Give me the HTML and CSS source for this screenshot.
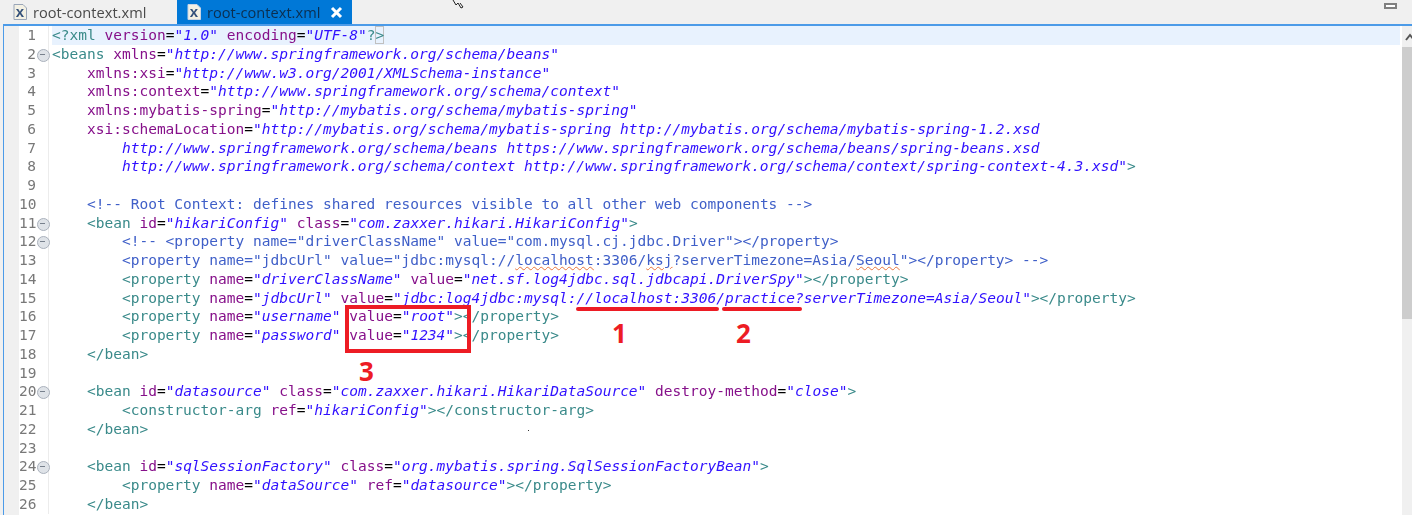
FILE: index.html
```html
<!DOCTYPE html>
<html lang="en">
<head>
<meta charset="utf-8">
<title>root-context.xml</title>
<link rel="stylesheet" href="styles.css">
</head>
<body>
<div class="window">
  <div class="tabs">
    <div class="tab">
      <svg class="file" viewBox="0 0 14 16"><path d="M1 .5h9l3.5 3.5v11.500h-12.500z" fill="#f4f1e4" stroke="#9aa6b8"/><text x="7" y="13" text-anchor="middle" class="filex">x</text></svg>
      <span>root-context.xml</span>
    </div>
    <div class="tab active">
      <svg class="file" viewBox="0 0 14 16"><path d="M1 .5h9l3.500 3.500v11.500h-12.500z" fill="#f4f1e4" stroke="#c8d4e4"/><text x="7" y="13" text-anchor="middle" class="filex">x</text></svg>
      <span>root-context.xml</span>
      <svg class="close" viewBox="0 0 13 13"><path d="M2 2l9 9M11 2l-9 9" stroke="#fff" stroke-width="3"/></svg>
    </div>
    <div class="maximize"></div>
  </div>
  <div class="editor">
    <div class="ruler"></div>
    <div class="lines">
      <div class="row"><span class="num">1</span><span class="fold"></span><code class="code current"><span class="t">&lt;?</span><span class="t">xml</span> <span class="a">version</span>=<span class="s">"1.0"</span> <span class="a">encoding</span>=<span class="s">"UTF-8"</span><span class="t">?</span><span class="t bracket">&gt;</span></code></div>
      <div class="row"><span class="num">2</span><span class="fold on"></span><code class="code"><span class="t">&lt;beans</span> <span class="a">xmlns</span>=<span class="s">"http://www.springframework.org/schema/beans"</span></code></div>
      <div class="row"><span class="num">3</span><span class="fold"></span><code class="code">    <span class="a">xmlns:xsi</span>=<span class="s">"http://www.w3.org/2001/XMLSchema-instance"</span></code></div>
      <div class="row"><span class="num">4</span><span class="fold"></span><code class="code">    <span class="a">xmlns:context</span>=<span class="s">"http://www.springframework.org/schema/context"</span></code></div>
      <div class="row"><span class="num">5</span><span class="fold"></span><code class="code">    <span class="a">xmlns:mybatis-spring</span>=<span class="s">"http://mybatis.org/schema/mybatis-spring"</span></code></div>
      <div class="row"><span class="num">6</span><span class="fold"></span><code class="code">    <span class="a">xsi:schemaLocation</span>=<span class="s">"http://mybatis.org/schema/mybatis-spring http://mybatis.org/schema/mybatis-spring-1.2.xsd</span></code></div>
      <div class="row"><span class="num">7</span><span class="fold"></span><code class="code"><span class="s">        http://www.springframework.org/schema/beans https://www.springframework.org/schema/beans/spring-beans.xsd</span></code></div>
      <div class="row"><span class="num">8</span><span class="fold"></span><code class="code"><span class="s">        http://www.springframework.org/schema/context http://www.springframework.org/schema/context/spring-context-4.3.xsd"</span><span class="t">&gt;</span></code></div>
      <div class="row"><span class="num">9</span><span class="fold"></span><code class="code"></code></div>
      <div class="row"><span class="num">10</span><span class="fold"></span><code class="code">    <span class="c">&lt;!-- Root Context: defines shared resources visible to all other web components --&gt;</span></code></div>
      <div class="row"><span class="num">11</span><span class="fold on"></span><code class="code">    <span class="t">&lt;bean</span> <span class="a">id</span>=<span class="s">"hikariConfig"</span> <span class="a">class</span>=<span class="s">"com.zaxxer.hikari.HikariConfig"</span><span class="t">&gt;</span></code></div>
      <div class="row"><span class="num">12</span><span class="fold on"></span><code class="code">        <span class="c">&lt;!-- &lt;property name="driverClassName" value="com.mysql.cj.jdbc.Driver"&gt;&lt;/property&gt;</span></code></div>
      <div class="row"><span class="num">13</span><span class="fold"></span><code class="code">        <span class="c">&lt;property name="jdbcUrl" value="jdbc:mysql://<span class="spell">localhost</span>:3306/<span class="spell">ksj</span>?serverTimezone=Asia/<span class="spell">Seoul</span>"&gt;&lt;/property&gt; --&gt;</span></code></div>
      <div class="row"><span class="num">14</span><span class="fold"></span><code class="code">        <span class="t">&lt;property</span> <span class="a">name</span>=<span class="s">"driverClassName"</span> <span class="a">value</span>=<span class="s">"net.sf.log4jdbc.sql.jdbcapi.DriverSpy"</span><span class="t">&gt;&lt;/property&gt;</span></code></div>
      <div class="row"><span class="num">15</span><span class="fold"></span><code class="code">        <span class="t">&lt;property</span> <span class="a">name</span>=<span class="s">"jdbcUrl"</span> <span class="a">value</span>=<span class="s">"jdbc:log4jdbc:mysql://localhost:3306/practice?serverTimezone=Asia/Seoul"</span><span class="t">&gt;&lt;/property&gt;</span></code></div>
      <div class="row"><span class="num">16</span><span class="fold"></span><code class="code">        <span class="t">&lt;property</span> <span class="a">name</span>=<span class="s">"username"</span> <span class="a">value</span>=<span class="s">"root"</span><span class="t">&gt;&lt;/property&gt;</span></code></div>
      <div class="row"><span class="num">17</span><span class="fold"></span><code class="code">        <span class="t">&lt;property</span> <span class="a">name</span>=<span class="s">"password"</span> <span class="a">value</span>=<span class="s">"1234"</span><span class="t">&gt;&lt;/property&gt;</span></code></div>
      <div class="row"><span class="num">18</span><span class="fold"></span><code class="code">    <span class="t">&lt;/bean&gt;</span></code></div>
      <div class="row"><span class="num">19</span><span class="fold"></span><code class="code"></code></div>
      <div class="row"><span class="num">20</span><span class="fold on"></span><code class="code">    <span class="t">&lt;bean</span> <span class="a">id</span>=<span class="s">"datasource"</span> <span class="a">class</span>=<span class="s">"com.zaxxer.hikari.HikariDataSource"</span> <span class="a">destroy-method</span>=<span class="s">"close"</span><span class="t">&gt;</span></code></div>
      <div class="row"><span class="num">21</span><span class="fold"></span><code class="code">        <span class="t">&lt;constructor-arg</span> <span class="a">ref</span>=<span class="s">"hikariConfig"</span><span class="t">&gt;&lt;/constructor-arg&gt;</span></code></div>
      <div class="row"><span class="num">22</span><span class="fold"></span><code class="code">    <span class="t">&lt;/bean&gt;</span></code></div>
      <div class="row"><span class="num">23</span><span class="fold"></span><code class="code"></code></div>
      <div class="row"><span class="num">24</span><span class="fold on"></span><code class="code">    <span class="t">&lt;bean</span> <span class="a">id</span>=<span class="s">"sqlSessionFactory"</span> <span class="a">class</span>=<span class="s">"org.mybatis.spring.SqlSessionFactoryBean"</span><span class="t">&gt;</span></code></div>
      <div class="row"><span class="num">25</span><span class="fold"></span><code class="code">        <span class="t">&lt;property</span> <span class="a">name</span>=<span class="s">"dataSource"</span> <span class="a">ref</span>=<span class="s">"datasource"</span><span class="t">&gt;&lt;/property&gt;</span></code></div>
      <div class="row"><span class="num">26</span><span class="fold"></span><code class="code">    <span class="t">&lt;/bean&gt;</span></code></div>
    </div>
    <div class="scrollbar">
      <div class="arrow"><svg viewBox="0 0 10 8"><path d="M1 7l4-5 4 5" fill="none" stroke="#555" stroke-width="2"/></svg></div>
      <div class="thumb"></div>
    </div>
  </div>
  <div class="mark line-one"></div>
  <div class="mark line-two"></div>
  <div class="mark box"></div>
  <div class="mark digit digit-one">1</div>
  <div class="mark digit digit-two">2</div>
  <div class="mark digit digit-three">3</div>
  <svg class="mark pointer" viewBox="0 0 12 10"><path d="M1 0l3 5 2-2 3 5 2-1-3-4" fill="none" stroke="#222"/></svg>
  <div class="mark speck"></div>
</div>
</body>
</html>
```
FILE: styles.css
```css
* { box-sizing: border-box; }
html, body { margin: 0; padding: 0; }
body { background: #f0f0f0; overflow: hidden; }

.window { position: relative; width: 1412px; height: 515px; overflow: hidden; display: flex; flex-direction: column; }

.tabs { height: 24px; display: flex; align-items: stretch; background: #f0f0f0; font-family: "Open Sans", sans-serif; font-size: 14.6px; letter-spacing: .02px; color: #4a4a4a; filter: blur(.35px); }
.tab { display: flex; align-items: center; width: 177px; padding-left: 13px; gap: 6px; }
.tab.active { width: 175px; padding-left: 10px; gap: 6px; background: #0078d7; color: #0b2f50; }
.file { width: 14px; height: 16px; flex: none; }
.filex { font-family: "Liberation Sans", sans-serif; font-size: 15px; font-weight: 700; fill: #33507a; }
.close { width: 13px; height: 13px; margin-left: 4px; flex: none; }
.maximize { width: 13px; height: 6px; margin: 3px 15px 0 auto; border: 2px solid #808080; background: #fff; }

.editor { flex: 1; margin-left: 3px; display: flex; border-top: 2px solid #4c9be8; border-left: 1px solid #4c9be8; background: #fff; min-height: 0; }
.ruler { width: 15px; flex: none; background: #f0f0f0; }
.lines { flex: 1; min-width: 0; padding-right: 2px; filter: blur(.45px); }

.row { display: flex; height: 18.76px; font-family: "DejaVu Sans Mono", monospace; font-size: 14.53px; line-height: 18.76px; }
.num { width: 17px; flex: none; text-align: right; color: #787878; white-space: nowrap; }
.fold { width: 12px; flex: none; border-right: 1px solid #ececec; position: relative; box-sizing: content-box; }
.fold.on::before { content: ""; position: absolute; left: 1px; top: 4px; width: 11px; height: 11px; border-radius: 50%; background: #dfe3e8; border: 1px solid #a9b0bb; }
.fold.on::after { content: ""; position: absolute; left: 4px; top: 9px; width: 5px; height: 1px; background: #77808c; }
.code { flex: 1; margin-left: 3px; font: inherit; white-space: pre; color: #000; min-width: 0; }
.current { background: #e8f2fe; }

.t { color: #3a8a8a; }
.a { color: #86108a; }
.s { color: #3010ff; font-style: italic; }
.c { color: #3f5fc8; }
.bracket { box-shadow: inset 0 0 0 1px #c0c0c0; display: inline-block; height: 18px; }
.spell { text-decoration: underline wavy #e8743c 1px; text-underline-offset: 1px; }

.scrollbar { width: 10px; flex: none; background: #f0f0f0; display: flex; flex-direction: column; }
.arrow { height: 21px; padding: 7px 0 0 3px; flex: none; overflow: hidden; }
.arrow svg { width: 10px; height: 8px; display: block; }
.thumb { height: 272px; background: #cdcdcd; flex: none; }

.mark { position: absolute; }
.line-one { left: 576px; top: 307px; width: 143px; height: 4px; background: #ed1c24; border-radius: 2px; }
.line-two { left: 722px; top: 307px; width: 80px; height: 4px; background: #ed1c24; border-radius: 2px; }
.box { left: 345px; top: 305px; width: 126px; height: 48px; border: 4px solid #ed1c24; }
.digit { font-family: "Noto Sans", sans-serif; font-weight: 700; font-size: 26px; line-height: 18px; color: #ed1c24; }
.digit-one { left: 612px; top: 324px; }
.digit-two { left: 736px; top: 324px; }
.digit-three { left: 359px; top: 362px; }
.pointer { left: 452px; top: 0; width: 12px; height: 10px; }
.speck { left: 528px; top: 430px; width: 1px; height: 1px; background: #333; }
```
